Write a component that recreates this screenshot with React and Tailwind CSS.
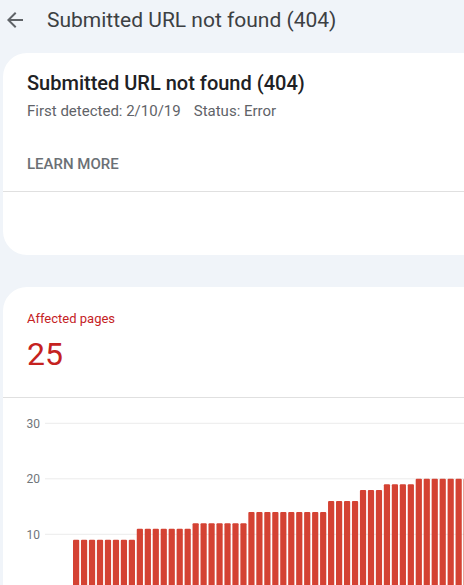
import React from "react";

const values = [
  ...Array(8).fill(9),
  ...Array(7).fill(11),
  ...Array(7).fill(12),
  ...Array(10).fill(14),
  ...Array(4).fill(16),
  ...Array(3).fill(18),
  ...Array(4).fill(19),
  ...Array(8).fill(20),
];

function Chart() {
  // svg origin at page x=3, y=398
  const zeroY = 191.8;
  const unit = 5.55;
  const grid = [30, 20, 10];
  return (
    <svg width="461" height="200" className="block">
      {grid.map((g) => {
        const y = zeroY - g * unit;
        return (
          <g key={g}>
            <line x1="42" x2="461" y1={y} y2={y} stroke="#ebebeb" strokeWidth="1" />
            <text
              x="37"
              y={y + 4.3}
              textAnchor="end"
              fontSize="12"
              fill="#70757a"
              fontFamily="Roboto, sans-serif"
            >
              {g}
            </text>
          </g>
        );
      })}
      {values.map((v, i) => {
        const x = 70 + i * 7.97;
        const h = v * unit;
        return <rect key={i} x={x} y={zeroY - h} width="6.2" height={h + 20} rx="1" fill="#d44233" />;
      })}
    </svg>
  );
}

export default function App() {
  return (
    <div
      className="w-[464px] h-[585px] overflow-hidden bg-[#f0f4f9]"
      style={{ fontFamily: "Roboto, 'Noto Sans', sans-serif" }}
    >
      <div className="flex items-center h-[38px] pl-[3px]">
        <svg width="24" height="24" viewBox="0 0 24 24" className="mt-[1px]">
          <path d="M20 11H7.83l5.59-5.59L12 4l-8 8 8 8 1.41-1.41L7.83 13H20v-2z" fill="#5f6368" />
        </svg>
        <div className="ml-[20px] mt-[2px] text-[21px] leading-[28px] text-[#3c4043]">Submitted URL not found (404)</div>
      </div>

      <div className="ml-[3px] mt-[15px] w-[480px] h-[202px] bg-white rounded-l-[24px] flex flex-col">
        <div className="pl-[24px] pt-[16px]">
          <div className="text-[20px] leading-[28px] font-medium text-[#202124]">Submitted URL not found (404)</div>
          <div className="text-[15px] leading-[20px] text-[#5f6368] mt-[4px]">
            First detected: 2/10/19<span className="ml-[13px]">Status: Error</span>
          </div>
          <div className="mt-[33px] text-[15px] leading-[20px] font-medium tracking-[0px] text-[#6b7075]">LEARN MORE</div>
        </div>
        <div className="mt-[17px] border-t border-[#e0e0e0]" />
      </div>

      <div className="ml-[3px] mt-[32px] w-[480px] bg-white rounded-tl-[24px]">
        <div className="pl-[24px] pt-[23px] pb-[23px]">
          <div className="text-[13px] leading-[18px] text-[#c5221f]">Affected pages</div>
          <div className="mt-[6px] text-[32px] leading-[40px] text-[#c5221f]">25</div>
        </div>
        <div className="border-t border-[#e0e0e0]" />
        <Chart />
      </div>
    </div>
  );
}
